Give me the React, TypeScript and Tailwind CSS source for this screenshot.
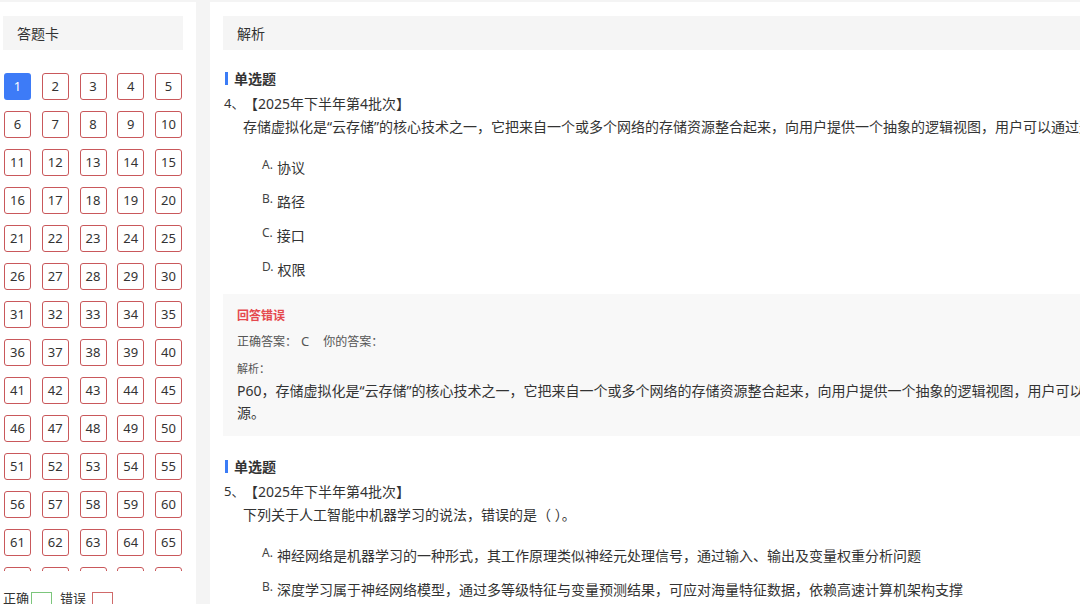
const font = { fontFamily: '"Noto Sans", "Noto Sans CJK SC", sans-serif' }

const nums = Array.from({ length: 70 }, (_, i) => i + 1)

function QuestionHead({ no }: { no: number }) {
  return (
    <>
      <div className="flex h-[20px] items-center pl-[2px]">
        <span className="mr-[6px] h-[13px] w-[3px] bg-[#3b7cf6]" />
        <span className="text-[14px] font-bold text-[#333]">单选题</span>
      </div>
      <div className="mt-[4px] flex h-[23px] items-center text-[13px] text-[#333]">
        <span className="w-[21px] whitespace-nowrap pl-[1px]">{no}、</span>
        <span className="text-[14px]">【2025年下半年第4批次】</span>
      </div>
    </>
  )
}

function Option({ letter, text }: { letter: string; text: string }) {
  return (
    <div className="flex h-[34px] items-center pl-[39px] text-[14px] text-[#333]">
      <span className="mr-[4px] -mt-[5px] text-[12px] text-[#444]">{letter}.</span>
      <span className="whitespace-nowrap">{text}</span>
    </div>
  )
}

export default function App() {
  return (
    <div
      className="flex h-[604px] w-[1080px] overflow-hidden bg-[#f4f4f4] pt-[2px]"
      style={font}
    >
      {/* left: answer sheet */}
      <div className="flex w-[196px] shrink-0 flex-col overflow-hidden bg-white pl-[3px]">
        <div className="mt-[14px] flex h-[34px] w-[180px] shrink-0 items-center bg-[#f5f5f5] pl-[14px] text-[14px] text-[#333]">
          答题卡
        </div>
        <div className="mt-[23px] h-[498px] shrink-0 overflow-hidden pl-[1px]">
          <div className="grid w-[178px] grid-cols-[repeat(5,27px)] justify-between gap-y-[11px]">
            {nums.map((n) => (
              <div
                key={n}
                className={
                  n === 1
                    ? 'flex h-[27px] w-[27px] items-center justify-center rounded-[3px] bg-[#3d7bf7] text-[13px] text-white'
                    : 'flex h-[27px] w-[27px] items-center justify-center rounded-[3px] border border-[#c9585b] text-[13px] text-[#333]'
                }
              >
                {n}
              </div>
            ))}
          </div>
        </div>
        <div className="mt-[20px] flex h-[16px] shrink-0 items-center text-[13px] text-[#333]">
          <span>正确</span>
          <span className="ml-[2px] h-[14px] w-[21px] border border-[#7cc67c]" />
          <span className="ml-[8px]">错误</span>
          <span className="ml-[6px] h-[14px] w-[21px] border border-[#d06a6a]" />
        </div>
      </div>

      {/* right: analysis */}
      <div className="ml-[14px] min-w-0 flex-1 overflow-hidden bg-white pl-[13px]">
        <div className="w-[1300px]">
          <div className="mt-[14px] flex h-[34px] items-center bg-[#f5f5f5] pl-[14px] text-[14px] text-[#333]">
            解析
          </div>

          <div className="mt-[18px]">
            <QuestionHead no={4} />
            <div className="flex h-[23px] items-center whitespace-nowrap pl-[20px] text-[14px] text-[#333]">
              存储虚拟化是“云存储”的核心技术之一，它把来自一个或多个网络的存储资源整合起来，向用户提供一个抽象的逻辑视图，用户可以通过这个视图中的统一逻辑接口来访问被整合的存储资源，这种抽象的逻辑视图被称为（ ）。
            </div>
            <div className="mt-[12px]">
              <Option letter="A" text="协议" />
              <Option letter="B" text="路径" />
              <Option letter="C" text="接口" />
              <Option letter="D" text="权限" />
            </div>
          </div>

          <div className="mt-[8px] bg-[#f8f8f8] pb-[12px] pl-[14px] pt-[12px]">
            <div className="flex h-[20px] items-center text-[12px] font-bold text-[#e5484d]">回答错误</div>
            <div className="mt-[6px] flex h-[20px] items-center text-[12px] text-[#555]">
              <span>正确答案：</span>
              <span className="ml-[4px] text-[13px]">C</span>
              <span className="ml-[14px]">你的答案：</span>
            </div>
            <div className="mt-[7px] flex h-[20px] items-center text-[11px] text-[#555]">解析：</div>
            <div className="mt-[1px] text-[14px] leading-[22px] text-[#333]">
              <p className="whitespace-nowrap">
                P60，存储虚拟化是“云存储”的核心技术之一，它把来自一个或多个网络的存储资源整合起来，向用户提供一个抽象的逻辑视图，用户可以通过这个视图中的统一逻辑接口来访问被整合的存储资
              </p>
              <p>源。</p>
            </div>
          </div>

          <div className="mt-[20px]">
            <QuestionHead no={5} />
            <div className="flex h-[23px] items-center whitespace-nowrap pl-[20px] text-[14px] text-[#333]">
              下列关于人工智能中机器学习的说法，错误的是（ ）。
            </div>
            <div className="mt-[12px]">
              <Option letter="A" text="神经网络是机器学习的一种形式，其工作原理类似神经元处理信号，通过输入、输出及变量权重分析问题" />
              <Option letter="B" text="深度学习属于神经网络模型，通过多等级特征与变量预测结果，可应对海量特征数据，依赖高速计算机架构支撑" />
              <Option letter="C" text="机器学习需要大量数据进行训练" />
            </div>
          </div>
        </div>
      </div>
    </div>
  )
}
